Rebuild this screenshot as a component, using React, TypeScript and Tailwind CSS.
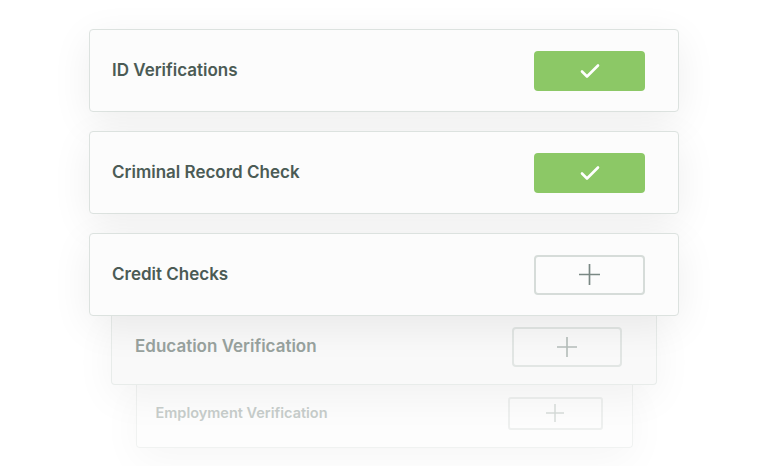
import React from "react";

type Status = "done" | "add";

interface CheckRowProps {
  label: string;
  status: Status;
  tone?: "solid" | "faded" | "ghost";
}

function CheckIcon() {
  return (
    <svg width="22" height="16" viewBox="0 0 22 16" fill="none">
      <path d="M3 8.5l5 5L19 2.5" stroke="white" strokeWidth="2.6" strokeLinecap="round" strokeLinejoin="round" />
    </svg>
  );
}

function PlusIcon({ size, color }: { size: number; color: string }) {
  return (
    <svg width={size} height={size} viewBox="0 0 20 20" fill="none">
      <path d="M10 0v20M0 10h20" stroke={color} strokeWidth="1.6" />
    </svg>
  );
}

function CheckRow({ label, status, tone = "solid" }: CheckRowProps) {
  if (tone === "faded") {
    return (
      <div className="relative z-20 flex h-[69px] w-[546px] items-center justify-between rounded-b-[4px] border border-t-0 border-[#e8ecea] bg-[#f9f9f9] pb-[6px] pl-[23px] pr-[34px] shadow-[0_12px_40px_rgba(0,0,0,0.05)]">
        <span className="text-[17px] font-semibold text-[#98a29e]">{label}</span>
        <div className="flex h-[40px] w-[110px] items-center justify-center rounded-[4px] border-2 border-[#e2e6e4]">
          <PlusIcon size={20} color="#b5bdba" />
        </div>
      </div>
    );
  }
  if (tone === "ghost") {
    return (
      <div className="relative z-10 flex h-[63px] w-[497px] items-center justify-between rounded-b-[4px] border border-t-0 border-[#f0f2f1] bg-[#fdfdfd] pb-[6px] pl-[19px] pr-[29px] shadow-[0_12px_40px_rgba(0,0,0,0.04)]">
        <span className="text-[14.5px] font-semibold text-[#c7cdcb]">{label}</span>
        <div className="flex h-[33px] w-[95px] items-center justify-center rounded-[3px] border-2 border-[#eef0ef]">
          <PlusIcon size={18} color="#d6dbd9" />
        </div>
      </div>
    );
  }
  return (
    <div className="relative z-30 flex h-[83px] w-[590px] items-center justify-between rounded-[4px] border border-[#dce2df] bg-[#fcfcfc] pl-[22px] pr-[33px] shadow-[0_10px_40px_rgba(0,0,0,0.07)]">
      <span className="text-[17px] font-semibold text-[#4b5b55]">{label}</span>
      {status === "done" ? (
        <div className="flex h-[40px] w-[111px] items-center justify-center rounded-[4px] bg-[#8cc866]">
          <CheckIcon />
        </div>
      ) : (
        <div className="flex h-[40px] w-[111px] items-center justify-center rounded-[4px] border-2 border-[#d6dcd9]">
          <PlusIcon size={21} color="#7a8884" />
        </div>
      )}
    </div>
  );
}

export default function App() {
  return (
    <div className="flex h-[466px] w-[768px] flex-col items-center overflow-hidden bg-white pt-[29px] font-['Inter',sans-serif]">
      <div className="flex flex-col items-center gap-[19px]">
        <CheckRow label="ID Verifications" status="done" />
        <CheckRow label="Criminal Record Check" status="done" />
        <CheckRow label="Credit Checks" status="add" />
      </div>
      <CheckRow label="Education Verification" status="add" tone="faded" />
      <CheckRow label="Employment Verification" status="add" tone="ghost" />
    </div>
  );
}
